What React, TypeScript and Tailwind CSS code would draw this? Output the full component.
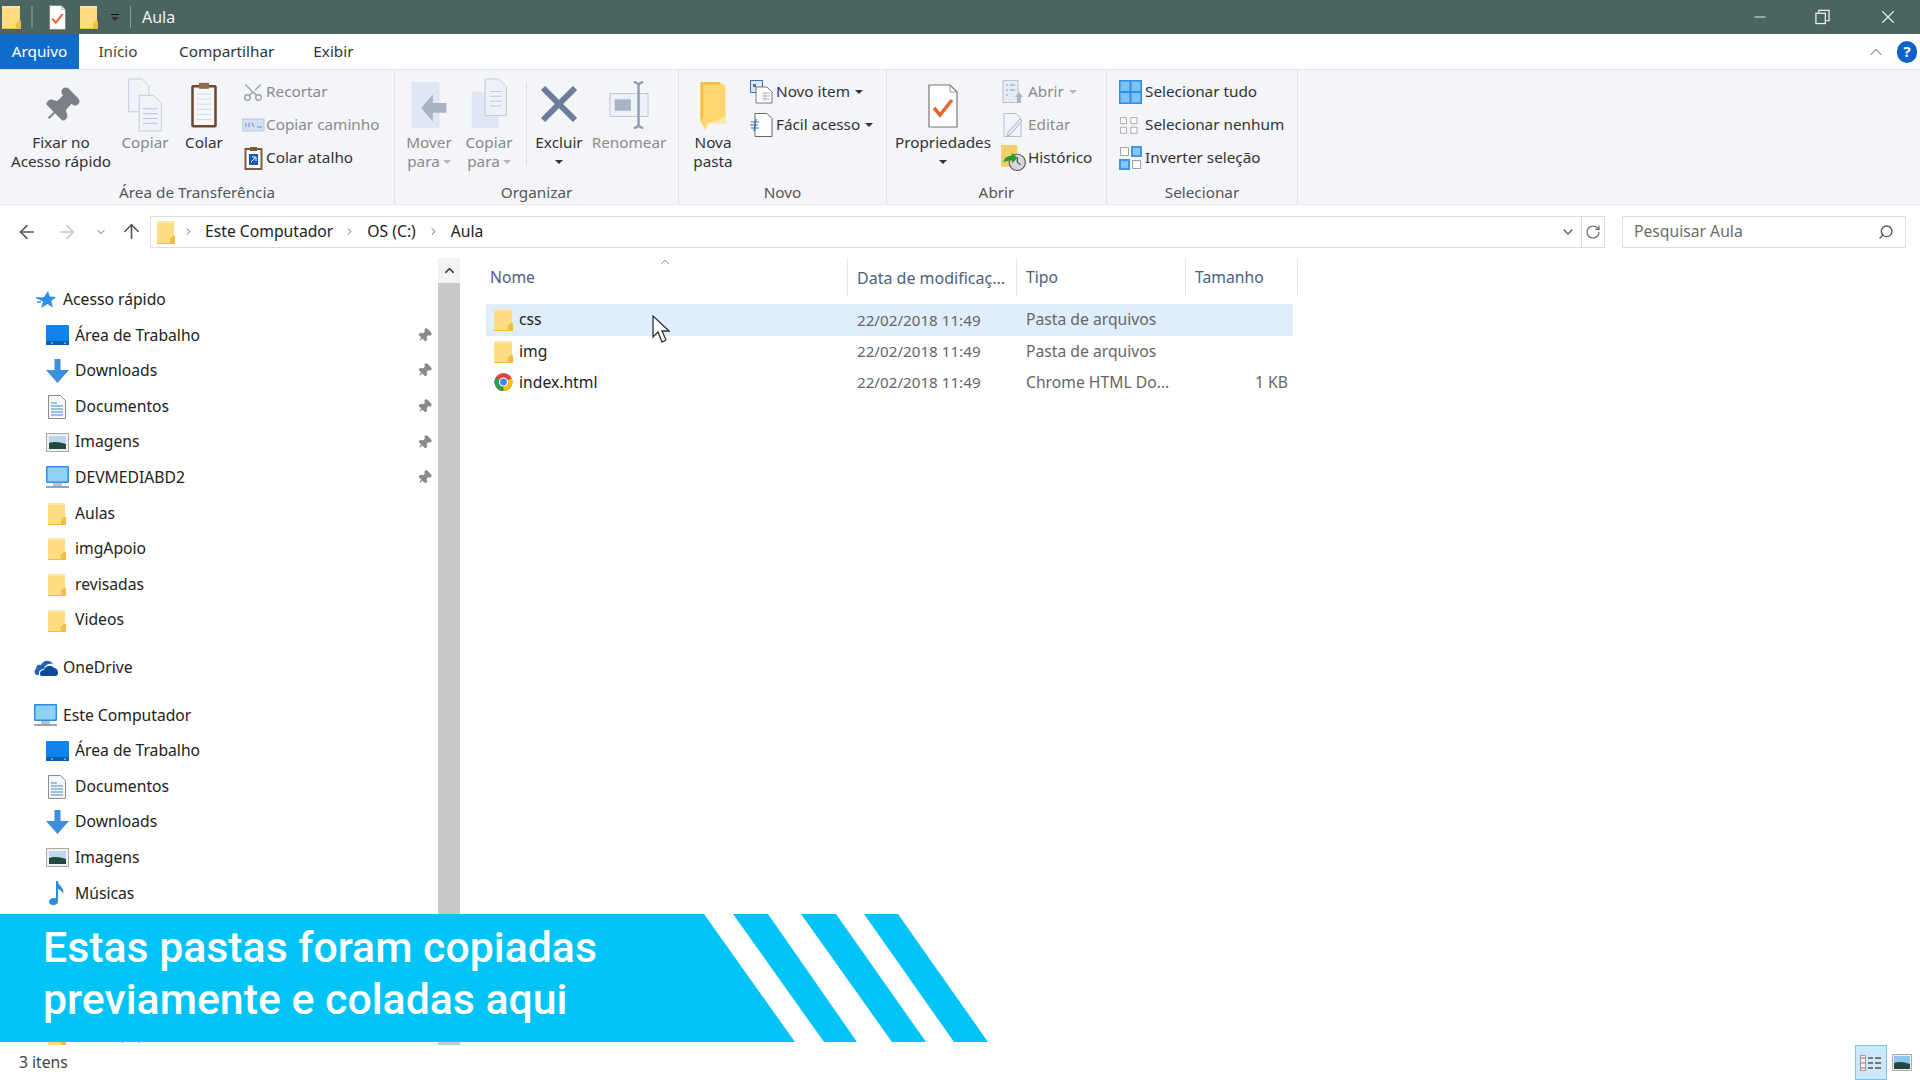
import { ArrowLeft, ArrowRight, ArrowUp, ChevronDown, ChevronRight, ChevronUp, Minus, Pin, RotateCw, Scissors, Search, X } from 'lucide-react'
import type { ReactNode } from 'react'

function Folder({ className = 'w-[18px] h-[23px]' }: { className?: string }) {
  return (
    <svg viewBox="0 0 18 23" preserveAspectRatio="none" className={className}>
      <path d="M0 1h17v22H0z" fill="#ffdc82" />
      <path d="M0 1h17v2H0z" fill="#ffe7a6" />
      <path d="M0 22h18v1H0zM13 23v-6h2v-2h3v8z" fill="#f2bd45" />
    </svg>
  )
}

function NewFolder() {
  return (
    <svg viewBox="0 0 26 52" className="w-[26px] h-[50px]">
      <path d="M0 1h20l6 4v39H8l-3 7-5-9z" fill="#ffd76e" />
      <path d="M0 1h20v3H3v34l-3 4z" fill="#f5bf45" />
      <path d="M8 44h18v-8c-6 4-12 6-18 8z" fill="#ffe7a6" />
    </svg>
  )
}

function Desktop() {
  return (
    <svg viewBox="0 0 23 20" className="w-[23px] h-[20px]">
      <rect width="23" height="20" rx="1" fill="#0f83ea" />
      <rect y="16" width="23" height="4" fill="#075fb5" />
      <rect x="5" y="17.5" width="2" height="1" fill="#bfe0fb" />
      <rect x="18" y="17.5" width="2" height="1" fill="#bfe0fb" />
    </svg>
  )
}

function Download() {
  return (
    <svg viewBox="0 0 23 24" className="w-[23px] h-[24px]">
      <path d="M8.5 0h6v11H23L11.5 24 0 11h8.5z" fill="#3d8fdc" />
    </svg>
  )
}

function Documents() {
  return (
    <svg viewBox="0 0 18 24" className="w-[18px] h-[24px]">
      <path d="M.5.5h12l5 5v18H.5z" fill="#f5f7fa" stroke="#8d8d8d" />
      <path d="M3 8h6M3 11h12M3 14h12M3 17h12M3 20h12" stroke="#3a8bd8" />
    </svg>
  )
}

function Pictures() {
  return (
    <svg viewBox="0 0 23 19" className="w-[23px] h-[19px]">
      <rect x=".5" y=".5" width="22" height="18" fill="#f0f0f0" stroke="#a9a9a9" />
      <rect x="3" y="3" width="17" height="13" fill="#bcd8ee" />
      <path d="M3 10c5-2 11-1 17 1v5H3z" fill="#21493f" />
    </svg>
  )
}

function Monitor() {
  return (
    <svg viewBox="0 0 23 23" className="w-[23px] h-[23px]">
      <rect width="23" height="17" rx="1" fill="#2a8fe6" />
      <rect x="1.5" y="1.5" width="20" height="14" fill="#8fd0f7" />
      <rect x="7" y="17" width="9" height="3" fill="#b9c2cc" />
      <rect y="20" width="23" height="2" fill="#9aa5b1" />
    </svg>
  )
}

function Music() {
  return (
    <svg viewBox="0 0 16 24" className="w-[16px] h-[24px]">
      <path d="M7 0h2c0 5 7 6 5 13-1-3-3-4-5-5v12c0 3-2 4-5 4s-4-2-4-3.500S2 17 5 17c1 0 2 .3 2 .5z" fill="#2f8de0" />
    </svg>
  )
}

function Cloud() {
  return (
    <svg viewBox="0 0 24 17" className="w-[24px] h-[17px]">
      <path d="M3 16C0 15 0 11 2 10c0-4 3-5 5-4 2-5 9-6 12-1-5-1-8 1-9 5-3 0-6 2-5 6z" fill="#1e62b8" />
      <path d="M7 17c-2-2-1-6 3-6 1-4 7-6 10-2 3 0 4 3 4 5s-1 3-3 3z" fill="#0b4a9f" />
    </svg>
  )
}

function Star() {
  return (
    <svg viewBox="0 0 20 20" className="w-[20px] h-[20px]">
      <path d="M12 1l1.800 5.500L20 7l-4.700 4 1.500 6.500-5.300-3.500L5 18l2-6.500L1 8.500 8 7z" fill="#2f8ee8" />
      <path d="M0 8h5M1 12h4" stroke="#2f8ee8" strokeWidth="1.500" />
    </svg>
  )
}

function ChromeIcon() {
  return (
    <svg viewBox="0 0 20 20" className="w-[19px] h-[20px]">
      <circle cx="10" cy="10" r="9.500" fill="#dc4437" />
      <path d="M10 10 1.800 5.200A9.500 9.500 0 0 0 10 19.500l4-6z" fill="#2f9e4f" />
      <path d="M10 10l8.700-3.800A9.500 9.500 0 0 1 10 19.500z" fill="#f4c20d" />
      <circle cx="10" cy="10" r="4.800" fill="#fff" />
      <circle cx="10" cy="10" r="3.600" fill="#4285f4" />
    </svg>
  )
}

function PropsIcon({ className = 'w-[30px] h-[44px]' }: { className?: string }) {
  return (
    <svg viewBox="0 0 30 44" className={className}>
      <path d="M1 1h21l7 7v35H1z" fill="#fff" stroke="#777" strokeWidth="1.200" />
      <path d="M22 1v7h7" fill="none" stroke="#999" />
      <path d="M6 24l6 7L24 16" fill="none" stroke="#e8662a" strokeWidth="3.500" />
    </svg>
  )
}

function PageStack({ arrow }: { arrow?: boolean }) {
  return (
    <svg viewBox="0 0 40 56" className="w-[40px] h-[54px] mt-[-2px]">
      {arrow ? (
        <>
          <rect x="2" y="4" width="29" height="48" fill="#dfe6f4" />
          <path d="M38 26H24v-9L12 31l12 14v-9h14z" fill="#a8b2c4" />
        </>
      ) : (
        <>
          <rect x="2" y="14" width="28" height="38" fill="#e0e6f3" />
          <path d="M16 1h14l8 8v30H16z" fill="#eef1f7" stroke="#c2c8d4" />
          <path d="M21 14h12M21 19h12M21 24h12M21 29h12" stroke="#c2c8d4" />
        </>
      )}
    </svg>
  )
}

function CopyIcon() {
  return (
    <svg viewBox="0 0 36 56" className="w-[36px] h-[54px] mt-[-2px]">
      <path d="M1 1h14l7 7v27H1z" fill="#f1f3f8" stroke="#c5cbd6" />
      <path d="M12 18h15l8 8v29H12z" fill="#f1f3f8" stroke="#c5cbd6" />
      <path d="M16 32h15M16 37h15M16 42h15M16 47h15" stroke="#b7bfcd" />
    </svg>
  )
}

function PasteIcon() {
  return (
    <svg viewBox="0 0 30 54" className="w-[30px] h-[46px] mt-[-2px]">
      <rect x="1.500" y="5" width="27" height="47" rx="1" fill="#f7f7f7" stroke="#6b4a30" strokeWidth="3" />
      <rect x="9" y="1" width="12" height="7" fill="#8b6f4e" />
      <path d="M6 14h18M6 20h18M6 26h18M6 32h18M6 38h18M6 44h18" stroke="#c9d7ea" />
    </svg>
  )
}

function RenameIcon() {
  return (
    <svg viewBox="0 0 42 52" className="w-[40px] h-[50px] mt-[-3px]">
      <rect x="1" y="14" width="40" height="24" fill="#eef1f7" stroke="#bcc5d4" />
      <rect x="6" y="20" width="17" height="12" fill="#a7b3c7" />
      <path d="M26 2c3 0 4 1 5 3 1-2 2-3 5-3M31 5v42M26 50c3 0 4-1 5-3 1 2 2 3 5 3" fill="none" stroke="#8e9bb0" strokeWidth="2.500" />
    </svg>
  )
}

function SmallIcon({ children, className = 'w-[23px] h-[24px]' }: { children: ReactNode; className?: string }) {
  return (
    <svg viewBox="0 0 23 24" className={className}>
      {children}
    </svg>
  )
}

const copyPath = (
  <SmallIcon>
    <rect x="0" y="6" width="22" height="12" fill="#d5dff2" stroke="#b5c4de" />
    <path d="M4 10v4M7 10v4M10 10l2 4M15 14h5" stroke="#6f8ec0" />
  </SmallIcon>
)

const pasteShortcut = (
  <SmallIcon>
    <rect x="3.500" y="3" width="16" height="20" fill="#fff" stroke="#7a5a3c" strokeWidth="2" />
    <rect x="8" y="1" width="7" height="4" fill="#7a5a3c" />
    <rect x="7" y="8" width="9" height="11" fill="#0e5bb8" />
    <path d="M9 16l4-4M10 11h4v4" stroke="#fff" fill="none" />
  </SmallIcon>
)

const newItem = (
  <SmallIcon>
    <rect x="0.500" y="0.500" width="12" height="12" fill="#dbe7f6" stroke="#3b74b4" />
    <path d="M3 4h3v3H3z" fill="#3b74b4" />
    <path d="M6 7h11l5 5v11H6z" fill="#fff" stroke="#777" />
    <path d="M12 13h8M12 16h8M12 19h8M15 13v8" stroke="#b6b6b6" />
  </SmallIcon>
)

const easyAccess = (
  <SmallIcon>
    <path d="M5 .5h12l5 5v18H5z" fill="#fff" stroke="#666" />
    <path d="M1 9h8M0 12h8M1 15h8M6 6l-2 12" stroke="#2f6fb5" strokeWidth="1.200" />
  </SmallIcon>
)

const openIcon = (
  <SmallIcon>
    <rect x="1" y="0.500" width="15" height="22" fill="#e6ebf4" stroke="#b9c3d4" />
    <path d="M4 5h2M4 10h2M4 15h2M8 5h5M8 10h5" stroke="#8e9cb3" />
    <path d="M17 12l4 5h-2v6h-4v-6h-2z" fill="#a8b6cb" />
  </SmallIcon>
)

const editIcon = (
  <SmallIcon>
    <path d="M2 .5h12l5 5v18H2z" fill="#f1f4f9" stroke="#b5bfce" />
    <path d="M20 8L8 22l-3 1 1-4L18 6z" fill="#e1e8f4" stroke="#a8b6cb" />
  </SmallIcon>
)

const historyIcon = (
  <SmallIcon className="w-[25px] h-[26px]">
    <rect x="0" y="0" width="15" height="20" fill="#f5cf67" />
    <circle cx="15" cy="16" r="7.500" fill="#d7d7d7" stroke="#555" />
    <path d="M15 11v5l3 2" stroke="#444" fill="none" />
    <path d="M2 16c1-5 5-6 8-6v-3l5 5-5 5v-3c-3 0-5 1-8 2z" fill="#2c9a2c" />
  </SmallIcon>
)

const selectAll = (
  <SmallIcon>
    <rect width="23" height="24" fill="#2f8fe8" />
    <path d="M1.500 1.500h9v9.500h-9zM12.500 1.500h9v9.500h-9zM1.500 13h9v9.500h-9zM12.500 13h9v9.500h-9z" fill="#7cc0f6" />
  </SmallIcon>
)

const selectNone = (
  <SmallIcon className="w-[20px] h-[24px]">
    <path d="M.5 3.500h7v7h-7zM12.500 3.500h7v7h-7zM.5 14.500h7v7h-7zM12.500 14.500h7v7h-7z" fill="#fff" stroke="#a0a0a0" />
  </SmallIcon>
)

const invertSel = (
  <SmallIcon>
    <rect x="12" y="0" width="11" height="11" fill="#3f97e8" />
    <rect x="0" y="13" width="11" height="11" fill="#3f97e8" />
    <path d="M1.500 1.500h8v8h-8zM13.500 14.500h8v8h-8z" fill="#fff" stroke="#a0a0a0" />
    <rect x="14" y="2" width="7" height="7" fill="#87c4f7" />
    <rect x="2" y="15" width="7" height="7" fill="#87c4f7" />
  </SmallIcon>
)

function Caret({ muted }: { muted?: boolean }) {
  return <span className={`inline-block w-0 h-0 border-x-[4px] border-x-transparent border-t-[4px] ${muted ? 'border-t-[#b5b5b5]' : 'border-t-[#333]'}`} />
}

function BigButton({ width, icon, lines, muted, caret }: { width: string; icon: ReactNode; lines: ReactNode[]; muted?: boolean; caret?: boolean }) {
  return (
    <div className={`${width} flex flex-col items-center shrink-0 ${muted ? 'text-[#8b8b8b]' : 'text-[#333]'}`}>
      <div className="h-[54px] flex items-center justify-center">{icon}</div>
      {lines.map((l, i) => (
        <div key={i} className="h-[19px] leading-[19px] whitespace-nowrap flex items-center gap-[3px]">
          {l}
        </div>
      ))}
      {caret && (
        <div className="h-[19px] flex items-center">
          <Caret />
        </div>
      )}
    </div>
  )
}

function SmallCol({ rows, iconWidth, className = '' }: { rows: { icon: ReactNode; label: string; muted?: boolean; caret?: 'dark' | 'muted' }[]; iconWidth: string; className?: string }) {
  return (
    <div className={`flex flex-col -mt-[4px] ${className}`}>
      {rows.map((r) => (
        <div key={r.label} className={`h-[33px] flex items-center whitespace-nowrap ${r.muted ? 'text-[#8b8b8b]' : 'text-[#333]'}`}>
          <div className={`${iconWidth} flex items-center justify-center shrink-0`}>{r.icon}</div>
          <span>{r.label}</span>
          {r.caret && (
            <span className="ml-[5px] flex">
              <Caret muted={r.caret === 'muted'} />
            </span>
          )}
        </div>
      ))}
    </div>
  )
}

function Group({ width, label, children }: { width: string; label: string; children: ReactNode }) {
  return (
    <div className={`${width} shrink-0 flex flex-col border-r border-[#dfe0e2]`}>
      <div className="h-[111px] pt-[9px] flex items-start">{children}</div>
      <div className="h-[24px] leading-[24px] text-center text-[#555] whitespace-nowrap">{label}</div>
    </div>
  )
}

const pinned = [
  { icon: <Desktop />, label: 'Área de Trabalho' },
  { icon: <Download />, label: 'Downloads' },
  { icon: <Documents />, label: 'Documentos' },
  { icon: <Pictures />, label: 'Imagens' },
  { icon: <Monitor />, label: 'DEVMEDIABD2' },
]

const quickFolders = ['Aulas', 'imgApoio', 'revisadas', 'Videos']

const computerItems = [
  { icon: <Desktop />, label: 'Área de Trabalho' },
  { icon: <Documents />, label: 'Documentos' },
  { icon: <Download />, label: 'Downloads' },
  { icon: <Pictures />, label: 'Imagens' },
  { icon: <Music />, label: 'Músicas' },
]

function NavRow({ icon, label, pin }: { icon: ReactNode; label: string; pin?: boolean }) {
  return (
    <div className="h-[35.6px] flex items-center pl-[45px] pr-[6px]">
      <div className="w-[24px] flex items-center justify-center shrink-0">{icon}</div>
      <span className="ml-[6px] text-[#222] whitespace-nowrap">{label}</span>
      {pin && <Pin className="ml-auto w-[15px] h-[15px] text-[#8a8a8a] rotate-45" fill="#8a8a8a" />}
    </div>
  )
}

function NavHeader({ icon, label, className = '' }: { icon: ReactNode; label: string; className?: string }) {
  return (
    <div className={`h-[35.6px] flex items-center pl-[33px] ${className}`}>
      <div className="w-[25px] flex items-center justify-center shrink-0">{icon}</div>
      <span className="ml-[5px] text-[#222] whitespace-nowrap">{label}</span>
    </div>
  )
}

const fileRows = [
  { name: 'css', icon: <Folder className="w-[19px] h-[23px]" />, type: 'Pasta de arquivos', size: '', selected: true },
  { name: 'img', icon: <Folder className="w-[19px] h-[23px]" />, type: 'Pasta de arquivos', size: '', selected: false },
  { name: 'index.html', icon: <ChromeIcon />, type: 'Chrome HTML Do...', size: '1 KB', selected: false },
]

export default function App() {
  return (
    <div className="relative w-[1920px] h-[1080px] overflow-hidden bg-white flex flex-col text-[15.7px] text-[#333] font-['Noto_Sans',sans-serif]">
      {/* title bar */}
      <div className="h-[34px] shrink-0 bg-[#4a645f] flex items-center text-[#f2f2f2]">
        <Folder className="ml-[2px] w-[19px] h-[24px]" />
        <div className="ml-[10px] w-[2px] h-[22px] bg-[#6f8580]" />
        <PropsIcon className="ml-[16px] w-[17px] h-[25px]" />
        <Folder className="ml-[14px] w-[18px] h-[24px]" />
        <div className="ml-[12px] w-[10px] flex flex-col items-center gap-[2px]">
          <div className="w-[8px] h-[1px] bg-[#111]" />
          <Caret />
        </div>
        <div className="ml-[10px] w-[1px] h-[22px] bg-[#8b9c98]" />
        <span className="ml-[11px] text-[16px]">Aula</span>
        <div className="ml-auto flex items-center">
          <Minus className="w-[18px] h-[18px]" strokeWidth={1.2} />
          <svg viewBox="0 0 16 16" className="ml-[46px] w-[15px] h-[16px]" fill="none" stroke="#f2f2f2" strokeWidth="1.300">
            <rect x="1" y="4" width="10" height="11" />
            <path d="M4 4V1h11v11h-4" />
          </svg>
          <X className="ml-[47px] mr-[21px] w-[22px] h-[22px]" strokeWidth={1.2} />
        </div>
      </div>

      {/* tabs */}
      <div className="h-[35px] shrink-0 flex items-stretch bg-white text-[15.3px]">
        <div className="w-[79px] bg-[#0f6cc8] text-white flex items-center justify-center">Arquivo</div>
        <div className="w-[78px] flex items-center justify-center text-[#444] bg-white">Início</div>
        <div className="ml-[22px] flex items-center">Compartilhar</div>
        <div className="ml-[39px] flex items-center">Exibir</div>
        <div className="ml-auto flex items-center pr-[3px]">
          <ChevronUp className="w-[20px] h-[20px] text-[#999]" strokeWidth={1.3} />
          <div className="ml-[11px] w-[20px] h-[22px] rounded-full bg-[#0b62c9] text-white text-[15px] font-bold flex items-center justify-center">?</div>
        </div>
      </div>

      {/* ribbon */}
      <div className="h-[136px] shrink-0 bg-[#f4f5f8] border-y border-[#e3e4e6] flex text-[15.3px]">
        <Group width="w-[395px]" label="Área de Transferência">
          <BigButton width="w-[122px]" icon={<Pin className="w-[40px] h-[40px] text-[#7b8087] rotate-45" fill="#7b8087" strokeWidth={1.2} />} lines={['Fixar no', 'Acesso rápido']} />
          <BigButton width="w-[46px]" muted icon={<CopyIcon />} lines={['Copiar']} />
          <BigButton width="w-[72px]" icon={<PasteIcon />} lines={['Colar']} />
          <SmallCol
            iconWidth="w-[26px]"
            rows={[
              { icon: <Scissors className="w-[22px] h-[24px] text-[#9aa3b0] -rotate-90" strokeWidth={1.5} />, label: 'Recortar', muted: true },
              { icon: copyPath, label: 'Copiar caminho', muted: true },
              { icon: pasteShortcut, label: 'Colar atalho' },
            ]}
          />
        </Group>
        <Group width="w-[284px]" label="Organizar">
          <BigButton width="w-[68px]" muted icon={<PageStack arrow />} lines={['Mover', <>para <Caret muted /></>]} />
          <BigButton width="w-[52px]" muted icon={<PageStack />} lines={['Copiar', <>para <Caret muted /></>]} />
          <div className="ml-[11px] w-[1px] h-[84px] mt-[3px] bg-[#dfe0e2]" />
          <BigButton
            width="w-[64px]"
            icon={
              <svg viewBox="0 0 38 38" className="w-[38px] h-[40px] -mt-[4px]">
                <path d="M3 3l32 32M35 3L3 35" stroke="#6b7d9a" strokeWidth="6" />
              </svg>
            }
            lines={['Excluir']}
            caret
          />
          <BigButton width="w-[76px]" muted icon={<RenameIcon />} lines={['Renomear']} />
        </Group>
        <Group width="w-[208px]" label="Novo">
          <BigButton width="w-[68px]" icon={<NewFolder />} lines={['Nova', 'pasta']} />
          <SmallCol
            iconWidth="w-[29px]"
            rows={[
              { icon: newItem, label: 'Novo item', caret: 'dark' },
              { icon: easyAccess, label: 'Fácil acesso', caret: 'dark' },
            ]}
          />
        </Group>
        <Group width="w-[220px]" label="Abrir">
          <BigButton width="w-[112px]" icon={<PropsIcon />} lines={['Propriedades']} caret />
          <SmallCol
            iconWidth="w-[29px]"
            rows={[
              { icon: openIcon, label: 'Abrir', muted: true, caret: 'muted' },
              { icon: editIcon, label: 'Editar', muted: true },
              { icon: historyIcon, label: 'Histórico' },
            ]}
          />
        </Group>
        <Group width="w-[191px]" label="Selecionar">
          <SmallCol
            className="pl-[8px]"
            iconWidth="w-[30px]"
            rows={[
              { icon: selectAll, label: 'Selecionar tudo' },
              { icon: selectNone, label: 'Selecionar nenhum' },
              { icon: invertSel, label: 'Inverter seleção' },
            ]}
          />
        </Group>
      </div>

      {/* address row */}
      <div className="h-[53px] shrink-0 flex items-center">
        <ArrowLeft className="ml-[16px] w-[22px] h-[22px] text-[#555]" strokeWidth={1.7} />
        <ArrowRight className="ml-[18px] w-[22px] h-[22px] text-[#c6c6c6]" strokeWidth={1.7} />
        <ChevronDown className="ml-[17px] w-[12px] h-[12px] text-[#666]" strokeWidth={2} />
        <ArrowUp className="ml-[13px] w-[23px] h-[23px] text-[#555]" strokeWidth={1.7} />
        <div className="ml-[7px] w-[1455px] h-[32px] border border-[#dcdcdc] flex items-center">
          <Folder className="ml-[6px] w-[18px] h-[24px]" />
          <ChevronRight className="ml-[8px] w-[11px] h-[11px] text-[#555]" strokeWidth={2} />
          <span className="ml-[11px] text-[#222] whitespace-nowrap">Este Computador</span>
          <ChevronRight className="ml-[11px] w-[11px] h-[11px] text-[#555]" strokeWidth={2} />
          <span className="ml-[12px] text-[#222] whitespace-nowrap">OS (C:)</span>
          <ChevronRight className="ml-[12px] w-[11px] h-[11px] text-[#555]" strokeWidth={2} />
          <span className="ml-[12px] text-[#222]">Aula</span>
          <ChevronDown className="ml-auto mr-[5px] w-[16px] h-[16px] text-[#555]" strokeWidth={2} />
          <div className="w-[1px] h-full bg-[#dcdcdc]" />
          <RotateCw className="mx-[3px] w-[16px] h-[18px] text-[#666]" strokeWidth={1.8} />
        </div>
        <div className="ml-[17px] w-[284px] h-[32px] border border-[#dcdcdc] flex items-center pl-[11px] pr-[11px] text-[#6d6d6d]">
          <span>Pesquisar Aula</span>
          <Search className="ml-auto w-[16px] h-[16px] -scale-x-100 text-[#555]" strokeWidth={2} />
        </div>
      </div>

      {/* body */}
      <div className="flex-1 min-h-0 flex">
        <div className="w-[438px] shrink-0 overflow-hidden pt-[24px]">
          <NavHeader icon={<Star />} label="Acesso rápido" />
          {pinned.map((p) => (
            <NavRow key={p.label} icon={p.icon} label={p.label} pin />
          ))}
          {quickFolders.map((f) => (
            <NavRow key={f} icon={<Folder />} label={f} />
          ))}
          <NavHeader className="mt-[12px]" icon={<Cloud />} label="OneDrive" />
          <NavHeader className="mt-[12px]" icon={<Monitor />} label="Este Computador" />
          {computerItems.map((p) => (
            <NavRow key={p.label} icon={p.icon} label={p.label} />
          ))}
          <div className="h-[106px]" />
          <NavRow icon={<Folder />} label="Disco (C:)" />
        </div>
        <div className="w-[22px] shrink-0 flex flex-col">
          <div className="h-[25px] bg-[#f3f3f3] flex items-center justify-center">
            <ChevronUp className="w-[15px] h-[15px] text-[#444]" strokeWidth={2.5} />
          </div>
          <div className="flex-1 bg-[#c9c9c9]" />
        </div>

        <div className="relative w-[1460px] pl-[26px]">
          <div className="w-[812px] h-[46px] flex items-start text-[#4c607a]">
            <div className="w-[362px] h-[37px] flex items-center pl-[4px] pt-[2px] border-r border-[#e5e5e5] relative">
              Nome
              <ChevronUp className="absolute left-[172px] -top-[3px] w-[14px] h-[14px] text-[#777]" strokeWidth={1.5} />
            </div>
            <div className="w-[169px] h-[37px] flex items-center pl-[9px] pt-[2px] border-r border-[#e5e5e5] whitespace-nowrap text-[16px]">Data de modificaç...</div>
            <div className="w-[169px] h-[37px] flex items-center pl-[9px] pt-[2px] border-r border-[#e5e5e5]">Tipo</div>
            <div className="w-[112px] h-[37px] flex items-center pl-[9px] pt-[2px] border-r border-[#e5e5e5]">Tamanho</div>
          </div>
          {fileRows.map((r) => (
            <div key={r.name} className={`w-[807px] flex items-center ${r.selected ? 'bg-[#dfeefa] h-[32px]' : 'h-[31px]'}`}>
              <div className="w-[362px] flex items-center pl-[8px]">
                {r.icon}
                <span className="ml-[6px] text-[#222]">{r.name}</span>
              </div>
              <div className="w-[168px] pl-[9px] text-[#666] text-[15.2px] whitespace-nowrap">22/02/2018 11:49</div>
              <div className="w-[169px] pl-[10px] text-[#666] whitespace-nowrap">{r.type}</div>
              <div className="flex-1 text-right pr-[5px] text-[#666]">{r.size}</div>
            </div>
          ))}
        </div>
      </div>

      {/* status bar */}
      <div className="h-[35px] shrink-0 bg-white flex items-center relative z-10">
        <span className="ml-[19px] pt-[1px] text-[#444]">3 itens</span>
        <div className="ml-auto mr-[8px] flex items-center">
          <div className="w-[32px] h-[35px] bg-[#cde8fb] border border-[#7cc0f0] flex items-center justify-center">
            <svg viewBox="0 0 22 16" className="w-[22px] h-[16px]">
              <path d="M.5.5h5v15h-5z" fill="#fff" stroke="#999" />
              <path d="M1 3h4M1 8h4M1 13h4" stroke="#d35" />
              <path d="M8 3h5M15 3h6M8 8h5M15 8h6M8 13h5M15 13h6" stroke="#555" strokeWidth="1.500" />
            </svg>
          </div>
          <div className="ml-[5px]">
            <svg viewBox="0 0 20 17" className="w-[20px] h-[17px]">
              <rect x=".5" y=".5" width="19" height="16" fill="#eee" stroke="#aaa" />
              <rect x="2" y="2" width="16" height="13" fill="#8ec6ee" />
              <path d="M2 9c5-2 10-1 16 1v5H2z" fill="#21493f" />
            </svg>
          </div>
        </div>
      </div>

      {/* video caption banner */}
      <div className="absolute left-0 top-[914px] w-[1000px] h-[128px] z-20">
        <svg viewBox="0 0 1000 128" className="absolute inset-0 w-[1000px] h-[128px]">
          <path d="M0 0H704L795 128H0z" fill="#00c4f6" />
          <path d="M733 0H768L857 128H824z" fill="#00c4f6" />
          <path d="M801 0H836L926 128H892z" fill="#00c4f6" />
          <path d="M864 0H898L988 128H954z" fill="#00c4f6" />
        </svg>
        <div className="absolute left-[43px] top-[7px] text-white text-[42.8px] leading-[52px] font-medium font-['Roboto',sans-serif] whitespace-nowrap">
          <div>Estas pastas foram copiadas</div>
          <div>previamente e coladas aqui</div>
        </div>
      </div>

      {/* mouse cursor */}
      <svg viewBox="0 0 18 28" className="absolute left-[652px] top-[315px] w-[18px] h-[28px] z-30">
        <path d="M1 1v21l5-5 4 10 4-2-4-9h7z" fill="#fff" stroke="#333" strokeWidth="1.300" />
      </svg>
    </div>
  )
}
